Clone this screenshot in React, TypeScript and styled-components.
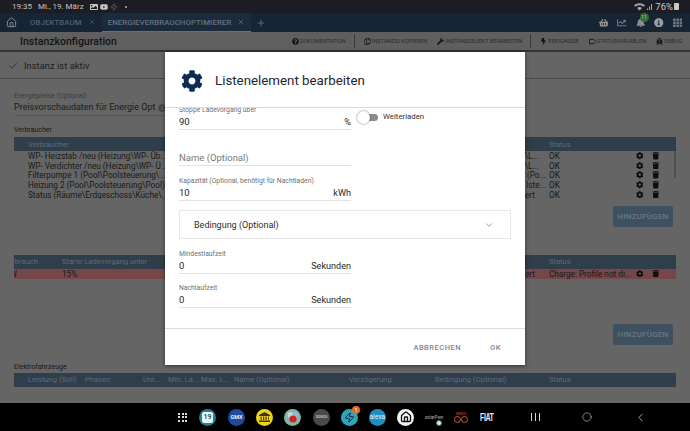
import { ReactNode } from "react";
import styled, { createGlobalStyle } from "styled-components";
import {
  FaBell,
  FaBolt,
  FaBug,
  FaChartLine,
  FaCog,
  FaImage,
  FaInfoCircle,
  FaQuestionCircle,
  FaRegCopy,
  FaShoppingBasket,
  FaTh,
  FaTrash,
  FaWrench,
  FaYoutube,
} from "react-icons/fa";
import { Check, ChevronDown, ChevronLeft, Circle, Home, Plus, X, Zap } from "lucide-react";

const consumers: [string, string, number][] = [
  ["WP- Heizstab /neu (Heizung\\WP- Üb...", "\\L...", 10],
  ["WP- Verdichter /neu (Heizung\\WP- Ü...", "\\L...", 10],
  ["Filterpumpe 1 (Pool\\Poolsteuerung\\...", "(Po...", 3],
  ["Heizung 2 (Pool\\Poolsteuerung\\Pool)", "lste...", 3],
  ["Status (Räume\\Erdgeschoss\\Küche\\...", "ert", 14],
];

const vehicleColumns: [string, number][] = [
  ["Leistung (Soll)", 57],
  ["Phasen", 58],
  ["Unt...", 25],
  ["Min. La...", 33],
  ["Max. L...", 33],
  ["Name (Optional)", 115],
  ["Verzögerung", 86],
  ["Bedingung (Optional)", 114],
  ["Status", 60],
];

function RowActions() {
  return (
    <Actions>
      <FaCog />
      <FaTrash />
    </Actions>
  );
}

function Field(props: { label?: string; value: string; unit?: string; placeholder?: boolean }) {
  return (
    <FieldBox>
      <FieldLabel>{props.label}</FieldLabel>
      <FieldValue $placeholder={props.placeholder}>
        <span>{props.value}</span>
        {props.unit && <FieldUnit>{props.unit}</FieldUnit>}
      </FieldValue>
    </FieldBox>
  );
}

function ToolButton(props: { icon: ReactNode; label: string }) {
  return (
    <ToolItem>
      {props.icon}
      <span>{props.label}</span>
    </ToolItem>
  );
}

export default function App() {
  return (
    <Page>
      <GlobalStyle />
      <StatusBar>
        <span>19:35</span>
        <StatusDate>Mi., 19. März</StatusDate>
        <StatusIcons>
          <FaImage />
          <FaYoutube />
          <Zap size={8} color="#66696e" />
          <StatusDot />
        </StatusIcons>
        <StatusRight>
          <svg width="20" height="8" viewBox="0 0 20 8">
            <path d="M0 2.5C3-.5 8-.5 11 2.5L9.8 3.8C7.5 1.8 3.5 1.8 1.2 3.8ZM3 5C4.5 3.6 6.5 3.6 8 5L5.5 7.5Z" fill="#a6a8ac" />
            <path d="M13 7h1V5.5h-1ZM15 7h1V3.5h-1ZM17 7h1V1h-1Z" fill="#a6a8ac" />
          </svg>
          <span>76%</span>
          <Battery />
        </StatusRight>
      </StatusBar>

      <TabBar>
        <HomeTab>
          <Home size={11} />
        </HomeTab>
        <Tab>
          OBJEKTBAUM
          <X size={8} />
        </Tab>
        <Tab $active>
          ENERGIEVERBRAUCHOPTIMIERER
          <X size={8} />
        </Tab>
        <AddTab>
          <Plus size={10} />
        </AddTab>
        <TabIcons>
          <FaShoppingBasket color="#9a9a8f" />
          <FaChartLine />
          <BellWrap>
            <FaBell />
            <BellBadge>11</BellBadge>
          </BellWrap>
          <FaInfoCircle color="#9a9fa4" />
          <FaTh />
        </TabIcons>
      </TabBar>

      <Toolbar>
        <PageTitle>Instanzkonfiguration</PageTitle>
        <ToolGroup>
          <ToolButton icon={<FaQuestionCircle />} label="DOKUMENTATION" />
        </ToolGroup>
        <ToolGroup>
          <ToolButton icon={<FaRegCopy />} label="INSTANZID KOPIEREN" />
          <ToolButton icon={<FaWrench />} label="INSTANZOBJEKT BEARBEITEN" />
        </ToolGroup>
        <ToolGroup $last>
          <ToolButton icon={<FaBolt />} label="EREIGNISSE" />
          <ToolButton icon={<TagShape />} label="STATUSVARIABLEN" />
          <ToolButton icon={<FaBug />} label="DEBUG" />
        </ToolGroup>
      </Toolbar>

      <Content>
        <ActiveRow>
          <Check size={10} strokeWidth={1.6} />
          Instanz ist aktiv
        </ActiveRow>
        <Body>
          <PriceField>
            <SmallLabel>Energiepreise (Optional)</SmallLabel>
            <PriceLine>
              <PriceValue>Preisvorschaudaten für Energie Opt</PriceValue>
              <FaInfoCircle />
            </PriceLine>
          </PriceField>

          <SectionLabel>Verbraucher</SectionLabel>
          <TableHead>
            <NameCell>Verbraucher</NameCell>
            <HeadStatus>Status</HeadStatus>
          </TableHead>
          <RowList>
            {consumers.map(([name, tail, pad]) => (
              <TableRow key={name}>
                <NameCell>{name}</NameCell>
                <TailCell $pad={pad}>{tail}</TailCell>
                <StatusCell>OK</StatusCell>
                <RowActions />
              </TableRow>
            ))}
            <Scrollbar />
          </RowList>
          <AddButton>HINZUFÜGEN</AddButton>

          <SecondTable>
            <TableHead>
              <ClippedCell $width={24}>Verbrauch</ClippedCell>
              <StartCell $left={24}>Starte Ladevorgang unter</StartCell>
              <HeadStatus>Status</HeadStatus>
            </TableHead>
            <TableRow $error>
              <ClippedCell $width={3}>W</ClippedCell>
              <StartCell $left={45}>15%</StartCell>
              <TailCell $pad={14}>ert</TailCell>
              <StatusCell>Charge: Profile not di...</StatusCell>
              <RowActions />
            </TableRow>
          </SecondTable>
          <AddButton $second>HINZUFÜGEN</AddButton>

          <VehicleLabel>Elektrofahrzeuge</VehicleLabel>
          <VehicleHead>
            {vehicleColumns.map(([label, width]) => (
              <VehicleCell key={label} $width={width}>
                {label}
              </VehicleCell>
            ))}
          </VehicleHead>
        </Body>
      </Content>

      <NavBar>
        <AppGrid>
          {Array.from({ length: 9 }).map((_, i) => (
            <i key={i} />
          ))}
        </AppGrid>
        <AppIcon $bg="#1c7f9e" $left={12}>
          <CalendarFace>19</CalendarFace>
        </AppIcon>
        <AppIcon $bg="#1f4a9c" $left={12}>
          <AppText>GMX</AppText>
        </AppIcon>
        <AppIcon $bg="#f0d417" $left={11}>
          <svg width="11" height="10" viewBox="0 0 11 10" fill="#3a3520">
            <path d="M0 3 5.5 0 11 3v1H0ZM1.5 4.5h1.2v3.5H1.5ZM4 4.5h1.2v3.5H4ZM6.5 4.5h1.2v3.5H6.5ZM9 4.5h.8v3.5H9ZM0 8.6h11V10H0Z" />
          </svg>
        </AppIcon>
        <AppIcon $bg="#7fb8a6" $left={11}>
          <svg width="14" height="14" viewBox="0 0 14 14">
            <circle cx="4.5" cy="5" r="3" fill="#c7d3d9" />
            <circle cx="9.5" cy="5" r="3" fill="#9fb4d0" />
            <circle cx="7" cy="9" r="3.6" fill="#d91f2a" />
          </svg>
        </AppIcon>
        <AppIcon $bg="#494949" $left={12}>
          <AppText $tiny>SONOS</AppText>
        </AppIcon>
        <AppIcon $bg="#2aa7bd" $left={11}>
          <Zap size={11} color="#123" />
          <NotifyBadge>1</NotifyBadge>
        </AppIcon>
        <AppIcon $bg="#1b8fc4" $left={11}>
          <AppText $alexa>alexa</AppText>
        </AppIcon>
        <AppIcon $bg="#f4f4f4" $left={11}>
          <Home size={12} color="#111" strokeWidth={2.6} />
        </AppIcon>
        <PlainApp $left={9}>
          solarPwn
          <ChromeDot />
        </PlainApp>
        <PlainApp $left={5} $red>
          <small>GENIUS</small>
          <InfinityMark>
            <i />
            <i />
          </InfinityMark>
        </PlainApp>
        <FiatMark>FIAT</FiatMark>
        <NavKeys>
          <RecentsKey>
            <i />
            <i />
            <i />
          </RecentsKey>
          <Circle size={10} strokeWidth={1.4} />
          <ChevronLeft size={13} strokeWidth={1.4} />
        </NavKeys>
      </NavBar>

      <Modal>
        <ModalHeader>
          <FaCog />
          <ModalTitle>Listenelement bearbeiten</ModalTitle>
        </ModalHeader>
        <ModalBody>
          <ToggleRow>
            <Field label="Stoppe Ladevorgang über" value="90" unit="%" />
            <Toggle>
              <ToggleKnob />
            </Toggle>
            <ToggleLabel>Weiterladen</ToggleLabel>
          </ToggleRow>
          <Spaced $top={12}>
            <Field value="Name (Optional)" placeholder />
          </Spaced>
          <Spaced $top={11}>
            <Field label="Kapazität (Optional, benötigt für Nachtladen)" value="10" unit="kWh" />
          </Spaced>
          <Accordion>
            Bedingung (Optional)
            <ChevronDown size={10} color="#666" strokeWidth={1.5} />
          </Accordion>
          <Spaced $top={11}>
            <Field label="Mindestlaufzeit" value="0" unit="Sekunden" />
          </Spaced>
          <Spaced $top={10}>
            <Field label="Nachlaufzeit" value="0" unit="Sekunden" />
          </Spaced>
        </ModalBody>
        <ModalFooter>
          <FooterButton>ABBRECHEN</FooterButton>
          <FooterButton>OK</FooterButton>
        </ModalFooter>
      </Modal>
    </Page>
  );
}

const GlobalStyle = createGlobalStyle`
  html, body {
    margin: 0;
    padding: 0;
    background: #000;
    font-family: Roboto, "Liberation Sans", sans-serif;
  }
  * {
    box-sizing: border-box;
  }
`;

const Page = styled.div`
  position: relative;
  width: 690px;
  height: 431px;
  overflow: hidden;
  display: flex;
  flex-direction: column;
  background: #656565;
`;

const StatusBar = styled.div`
  height: 13px;
  background: #1c1c24;
  color: #c4c4c6;
  font-size: 8px;
  display: flex;
  align-items: center;
  padding: 0 11px 0 12px;
`;

const StatusDate = styled.span`
  margin-left: 6px;
`;

const StatusIcons = styled.div`
  display: flex;
  align-items: center;
  gap: 2px;
  margin-left: 6px;
  font-size: 8px;
`;

const StatusDot = styled.i`
  width: 2px;
  height: 2px;
  border-radius: 50%;
  background: #b0b0b0;
  margin-left: 5px;
`;

const StatusRight = styled.div`
  margin-left: auto;
  display: flex;
  align-items: center;
  gap: 1px;
  font-size: 9.5px;
  color: #c9c9cb;
`;

const Battery = styled.i`
  width: 5px;
  height: 7px;
  background: #c9c9cb;
  border-radius: 1px;
`;

const TabBar = styled.div`
  height: 19px;
  background: #172433;
  color: #5d6d7c;
  font-size: 7.8px;
  font-weight: 500;
  letter-spacing: 0.1px;
  display: flex;
  align-items: stretch;
`;

const HomeTab = styled.div`
  width: 24px;
  padding-left: 6px;
  display: flex;
  align-items: center;
  color: #8c949b;
`;

const Tab = styled.div<{ $active?: boolean }>`
  display: flex;
  align-items: center;
  gap: 6px;
  padding: 0 6px;
  color: ${({ $active }) => ($active ? "#64727f" : "#4f6070")};
  background: ${({ $active }) => ($active ? "#1c2b3b" : "transparent")};
  border-bottom: 1px solid ${({ $active }) => ($active ? "#64727f" : "transparent")};
`;

const AddTab = styled.div`
  display: flex;
  align-items: center;
  margin-left: 5px;
  color: #68747f;
`;

const TabIcons = styled.div`
  margin-left: auto;
  padding-right: 8px;
  display: flex;
  align-items: center;
  gap: 9px;
  font-size: 9.5px;
  color: #6f7478;
`;

const BellWrap = styled.div`
  position: relative;
  display: flex;
  color: #8a8e92;
`;

const BellBadge = styled.span`
  position: absolute;
  top: -5px;
  left: 4px;
  width: 9px;
  height: 9px;
  border-radius: 50%;
  background: #2f6e35;
  color: #9fb89f;
  font-size: 5px;
  line-height: 9px;
  text-align: center;
`;

const Toolbar = styled.div`
  height: 20px;
  background: #5f5f5f;
  border-bottom: 2px solid #333;
  display: flex;
  align-items: center;
  padding-left: 20px;
`;

const PageTitle = styled.div`
  font-size: 10.5px;
  font-weight: 500;
  color: #141414;
  margin-right: auto;
`;

const ToolGroup = styled.div<{ $last?: boolean }>`
  display: flex;
  align-items: center;
  gap: 10px;
  height: 14px;
  padding: 0 8px 0 9px;
  border-right: ${({ $last }) => ($last ? "none" : "1px solid #3a3a3a")};
`;

const ToolItem = styled.div`
  display: flex;
  align-items: center;
  gap: 1px;
  font-size: 5.6px;
  color: #2c2c2c;
  white-space: nowrap;

  svg {
    width: 7px;
    height: 7px;
    color: #161616;
  }
`;

const TagShape = styled((props: { className?: string }) => (
  <svg className={props.className} viewBox="0 0 8 8">
    <path d="M.5 1.5h5L7.5 4l-2 2.5h-5Z" fill="none" stroke="currentColor" />
  </svg>
))``;

const Content = styled.div`
  flex: 1;
  min-height: 0;
  display: flex;
  flex-direction: column;
`;

const ActiveRow = styled.div`
  height: 27px;
  flex: none;
  padding: 1px 0 0 8px;
  border-bottom: 1px solid #4a4a4a;
  display: flex;
  align-items: center;
  gap: 6px;
  font-size: 9.2px;
  letter-spacing: 0.1px;
  color: #1d1d1d;
`;

const Body = styled.div`
  padding: 0 14px;
  display: flex;
  flex-direction: column;
`;

const PriceField = styled.div`
  margin-top: 13px;
  width: 158px;
  padding-bottom: 1px;
  border-bottom: 1px solid #585858;
`;

const SmallLabel = styled.div`
  font-size: 6.8px;
  line-height: 8px;
  color: #3c3c3c;
`;

const PriceLine = styled.div`
  margin-top: 1px;
  display: flex;
  align-items: center;
  gap: 3px;

  svg {
    width: 8px;
    height: 8px;
    color: #444;
    flex: none;
  }
`;

const PriceValue = styled.div`
  font-size: 9px;
  line-height: 13px;
  white-space: nowrap;
  color: #1c1c1c;
`;

const SectionLabel = styled.div`
  margin-top: 10px;
  font-size: 7px;
  line-height: 8px;
  color: #181818;
`;

const VehicleLabel = styled(SectionLabel)`
  margin-top: 18px;
`;

const TableHead = styled.div`
  height: 14px;
  margin-top: 3px;
  background: #2f3e4a;
  color: #5c6c79;
  font-size: 7.6px;
  display: flex;
  align-items: center;
`;

const RowList = styled.div`
  position: relative;
  height: 48px;
  overflow: hidden;
`;

const Scrollbar = styled.i`
  position: absolute;
  right: 0;
  top: 0;
  width: 2px;
  height: 27px;
  background: #505050;
`;

const TableRow = styled.div<{ $error?: boolean }>`
  height: ${({ $error }) => ($error ? "10px" : "9.7px")};
  background: ${({ $error }) => ($error ? "#754749" : "transparent")};
  color: #191919;
  font-size: 8.2px;
  display: flex;
  align-items: center;
  white-space: nowrap;
`;

const NameCell = styled.div`
  width: 165px;
  padding-left: 14px;
  white-space: nowrap;
`;

const TailCell = styled.div<{ $pad: number }>`
  margin-left: auto;
  width: 40px;
  text-align: right;
  padding-right: ${({ $pad }) => $pad}px;
`;

const StatusCell = styled.div`
  width: 82px;
  flex: none;
  white-space: nowrap;
`;

const HeadStatus = styled(StatusCell)`
  margin-left: auto;
  margin-right: 45px;
`;

const Actions = styled.div`
  width: 45px;
  flex: none;
  display: flex;
  align-items: center;
  gap: 9px;
  padding-left: 4.5px;
  font-size: 7.5px;
  color: #0e0e0e;
`;

const SecondTable = styled.div`
  margin-top: 28px;

  ${TableHead} {
    margin-top: 0;
  }
`;

const ClippedCell = styled.div<{ $width: number }>`
  width: ${({ $width }) => $width}px;
  overflow: hidden;
  display: flex;
  justify-content: flex-end;
  white-space: nowrap;
`;

const StartCell = styled.div<{ $left: number }>`
  margin-left: ${({ $left }) => $left}px;
`;

const AddButton = styled.button<{ $second?: boolean }>`
  align-self: flex-end;
  margin: ${({ $second }) => ($second ? "45px" : "6.5px")} 3px 0 0;
  width: 60px;
  height: 21px;
  padding: 0;
  border: none;
  border-radius: 2px;
  background: #3f5160;
  color: #677885;
  font-family: inherit;
  font-size: 8px;
  font-weight: 500;
  letter-spacing: 0.2px;
`;

const VehicleHead = styled(TableHead)`
  margin-top: 2px;
  padding-left: 14px;
`;

const VehicleCell = styled.div<{ $width: number }>`
  width: ${({ $width }) => $width}px;
  flex: none;
  white-space: nowrap;
`;

const NavBar = styled.div`
  height: 28px;
  flex: none;
  background: #000;
  display: flex;
  align-items: center;
  padding-left: 178px;
  position: relative;
`;

const AppGrid = styled.div`
  width: 9px;
  display: grid;
  grid-template-columns: repeat(3, 2px);
  gap: 1.5px;

  i {
    width: 2px;
    height: 2px;
    background: #ddd;
  }
`;

const AppIcon = styled.div<{ $bg: string; $left: number }>`
  position: relative;
  width: 17px;
  height: 17px;
  flex: none;
  margin-left: ${({ $left }) => $left}px;
  border-radius: 50%;
  background: ${({ $bg }) => $bg};
  display: flex;
  align-items: center;
  justify-content: center;
`;

const CalendarFace = styled.div`
  width: 11px;
  height: 11px;
  border-radius: 2px;
  background: #eef3f5;
  color: #155e75;
  font-size: 7px;
  font-weight: 700;
  line-height: 11px;
  text-align: center;
`;

const AppText = styled.span<{ $tiny?: boolean; $alexa?: boolean }>`
  font-size: ${({ $tiny, $alexa }) => ($tiny ? "3.5px" : $alexa ? "6.5px" : "5.5px")};
  font-weight: ${({ $alexa }) => ($alexa ? 400 : 700)};
  color: ${({ $tiny }) => ($tiny ? "#bbb" : "#e8eef5")};
`;

const NotifyBadge = styled.span`
  position: absolute;
  top: -3px;
  right: -2px;
  width: 8px;
  height: 8px;
  border-radius: 50%;
  background: #e2692f;
  color: #fff;
  font-size: 5.5px;
  line-height: 8px;
  text-align: center;
`;

const PlainApp = styled.div<{ $left: number; $red?: boolean }>`
  position: relative;
  width: 22px;
  flex: none;
  margin-left: ${({ $left }) => $left}px;
  color: ${({ $red }) => ($red ? "#d05a40" : "#bbb")};
  font-size: 4.5px;
  text-align: center;
  white-space: nowrap;

  small {
    display: block;
    font-size: 3px;
    line-height: 4px;
  }
`;

const ChromeDot = styled.i`
  position: absolute;
  top: 5px;
  right: 3px;
  width: 6px;
  height: 6px;
  border-radius: 50%;
  background: #e8e8e8;
  border: 1.5px solid #3f7d4d;
`;

const InfinityMark = styled.div`
  display: flex;
  justify-content: center;

  i {
    width: 7px;
    height: 7px;
    border: 1px solid #c75a3d;
    border-radius: 50%;
  }
`;

const FiatMark = styled.div`
  margin-left: 8px;
  color: #e9e9e9;
  font-family: "Liberation Sans", sans-serif;
  font-size: 7px;
  font-weight: 700;
  letter-spacing: -0.4px;
  transform: scaleY(1.55);
`;

const NavKeys = styled.div`
  position: absolute;
  left: 531px;
  top: 0;
  height: 28px;
  width: 116px;
  display: flex;
  align-items: center;
  justify-content: space-between;
  color: #d8d8d8;
`;

const RecentsKey = styled.div`
  display: flex;
  gap: 3px;

  i {
    width: 1px;
    height: 8px;
    background: #d8d8d8;
  }
`;

const Modal = styled.div`
  position: absolute;
  left: 165px;
  top: 52px;
  width: 360px;
  height: 313px;
  background: #fff;
  box-shadow: 0 1px 4px rgba(0, 0, 0, 0.5);
  display: flex;
  flex-direction: column;
`;

const ModalHeader = styled.div`
  height: 56px;
  flex: none;
  padding: 2px 0 0 16px;
  border-bottom: 1px solid #dcdcdc;
  display: flex;
  align-items: center;
  gap: 12px;

  > svg {
    width: 22px;
    height: 22px;
    color: #0d2c54;
  }
`;

const ModalTitle = styled.div`
  font-size: 13.3px;
  color: #1a2530;
`;

const ModalBody = styled.div`
  flex: 1;
  min-height: 0;
  overflow: hidden;
  padding: 0 14px;
`;

const ToggleRow = styled.div`
  position: relative;
  margin-top: -2px;
  display: flex;
  align-items: flex-start;
`;

const Spaced = styled.div<{ $top: number }>`
  margin-top: ${({ $top }) => $top}px;
`;

const FieldBox = styled.div`
  width: 172px;
  flex: none;
  padding-bottom: 1px;
  border-bottom: 1px solid #e2e2e2;
`;

const FieldLabel = styled.div`
  height: 8px;
  margin-bottom: 2px;
  font-size: 6.8px;
  line-height: 8px;
  color: #6f6f6f;
  white-space: nowrap;
`;

const FieldValue = styled.div<{ $placeholder?: boolean }>`
  display: flex;
  justify-content: space-between;
  font-size: 9.5px;
  line-height: 12px;
  color: ${({ $placeholder }) => ($placeholder ? "#7a7a7a" : "#262626")};
`;

const FieldUnit = styled.span`
  font-size: 9.1px;
`;

const Toggle = styled.div`
  position: relative;
  width: 15px;
  height: 7px;
  margin: 8px 0 0 12px;
  border-radius: 4px;
  background: #8d8d8d;
`;

const ToggleKnob = styled.i`
  position: absolute;
  left: -6px;
  top: -3px;
  width: 13px;
  height: 13px;
  border-radius: 50%;
  background: #fff;
  box-shadow: 0 0 2px rgba(0, 0, 0, 0.6);
`;

const ToggleLabel = styled.div`
  margin: 6px 0 0 5px;
  font-size: 7.8px;
  line-height: 10px;
  color: #333;
`;

const Accordion = styled.div`
  height: 29px;
  margin-top: 9px;
  padding: 0 16px 0 14px;
  border: 1px solid #e8e8e8;
  display: flex;
  align-items: center;
  justify-content: space-between;
  font-size: 9px;
  color: #2c2c2c;
`;

const ModalFooter = styled.div`
  height: 37px;
  flex: none;
  padding-right: 24px;
  border-top: 1px solid #dcdcdc;
  display: flex;
  align-items: center;
  justify-content: flex-end;
  gap: 29px;
`;

const FooterButton = styled.div`
  font-size: 7.5px;
  font-weight: 500;
  letter-spacing: 0.5px;
  color: #7f8890;
`;
